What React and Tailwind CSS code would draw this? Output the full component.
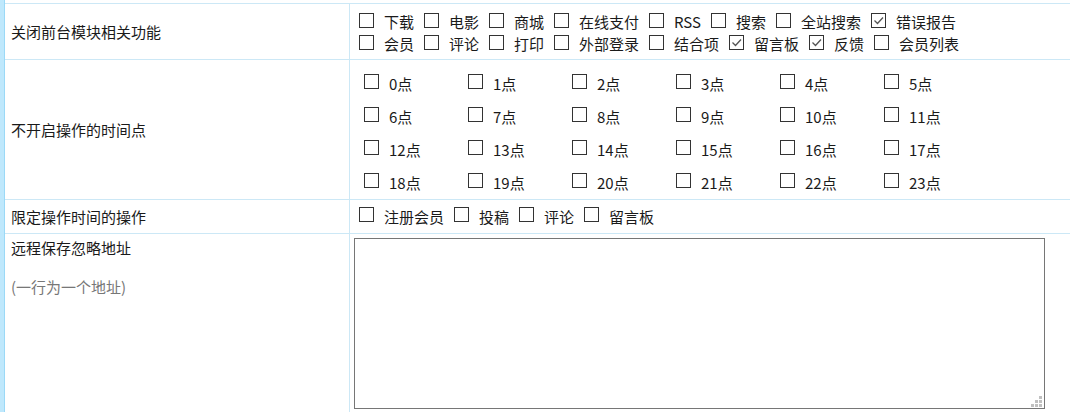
import React from 'react';

const moduleRows = [
  [['下载'], ['电影'], ['商城'], ['在线支付'], ['RSS'], ['搜索'], ['全站搜索'], ['错误报告', true]],
  [['会员'], ['评论'], ['打印'], ['外部登录'], ['结合项'], ['留言板', true], ['反馈', true], ['会员列表']],
];

const limitOps = ['注册会员', '投稿', '评论', '留言板'];

const hours = Array.from({ length: 24 }, (_, i) => `${i}点`);

function Box({ checked }) {
  return (
    <span className="relative -top-[2px] inline-flex h-[15px] w-[15px] shrink-0 items-center justify-center border border-[#333] bg-white">
      {checked && (
        <svg width="13" height="13" viewBox="0 0 13 13">
          <polyline points="2.5,6.5 5.5,9.5 11,3.5" fill="none" stroke="#555" strokeWidth="1.3" />
        </svg>
      )}
    </span>
  );
}

function Check({ label, checked }) {
  return (
    <span className="mr-[10px] inline-flex items-center">
      <Box checked={checked} />
      <span className="ml-[10px]">{label}</span>
    </span>
  );
}

function Row({ label, className, labelClass = 'items-center', children }) {
  return (
    <div className={`flex border-b border-[#cce8f6] ${className}`}>
      <div className={`flex w-[345px] shrink-0 border-r border-[#cce8f6] pl-[6px] ${labelClass}`}>{label}</div>
      <div className="flex-1">{children}</div>
    </div>
  );
}

export default function App() {
  return (
    <div
      className="flex h-[412px] w-[1070px] overflow-hidden bg-white text-[15px] leading-[22px] text-[#1a1a1a]"
      style={{ fontFamily: '"Noto Sans CJK SC", "Noto Sans", sans-serif' }}
    >
      <div className="w-[5px] shrink-0 border-r border-[#9bd9f7] bg-[#bfe8fc]" />
      <div className="flex-1">
        <div className="h-[4px] border-b border-[#cce8f6]" />

        <Row label="关闭前台模块相关功能" className="h-[56px]">
          <div className="pl-[9px] pt-[7px]">
            {moduleRows.map((items, i) => (
              <div key={i} className="flex h-[22px] items-center">
                {items.map(([t, c]) => (
                  <Check key={t} label={t} checked={c} />
                ))}
              </div>
            ))}
          </div>
        </Row>

        <Row label="不开启操作的时间点" className="h-[140px]">
          <div className="grid grid-cols-[repeat(6,104px)] pl-[14px] pt-[7px]">
            {hours.map((h) => (
              <div key={h} className="flex h-[33px] items-center">
                <Box />
                <span className="ml-[10px]">{h}</span>
              </div>
            ))}
          </div>
        </Row>

        <Row label="限定操作时间的操作" className="h-[34px]">
          <div className="flex h-full items-center pl-[9px]">
            {limitOps.map((t) => (
              <Check key={t} label={t} />
            ))}
          </div>
        </Row>

        <Row
          className="h-[200px]"
          labelClass="flex-col items-start pt-[3px]"
          label={
            <>
              <span>远程保存忽略地址</span>
              <span className="mt-[17px] text-[#777]">(一行为一个地址)</span>
            </>
          }
        >
          <div className="pl-[4px] pt-[4px]">
            <div className="relative w-[691px]">
              <textarea className="block h-[171px] w-[691px] resize-none border border-[#767676] bg-white outline-none" />
              {/* resize grip */}
              <svg className="absolute bottom-[2px] right-[3px]" width="11" height="11" viewBox="0 0 11 11">
                <rect x="8" y="0" width="3" height="3" fill="#c0c0c0" />
                <rect x="4" y="4" width="3" height="3" fill="#c0c0c0" />
                <rect x="8" y="4" width="3" height="3" fill="#c0c0c0" />
                <rect x="0" y="8" width="3" height="3" fill="#c0c0c0" />
                <rect x="4" y="8" width="3" height="3" fill="#c0c0c0" />
                <rect x="8" y="8" width="3" height="3" fill="#c0c0c0" />
              </svg>
            </div>
          </div>
        </Row>
      </div>
    </div>
  );
}
